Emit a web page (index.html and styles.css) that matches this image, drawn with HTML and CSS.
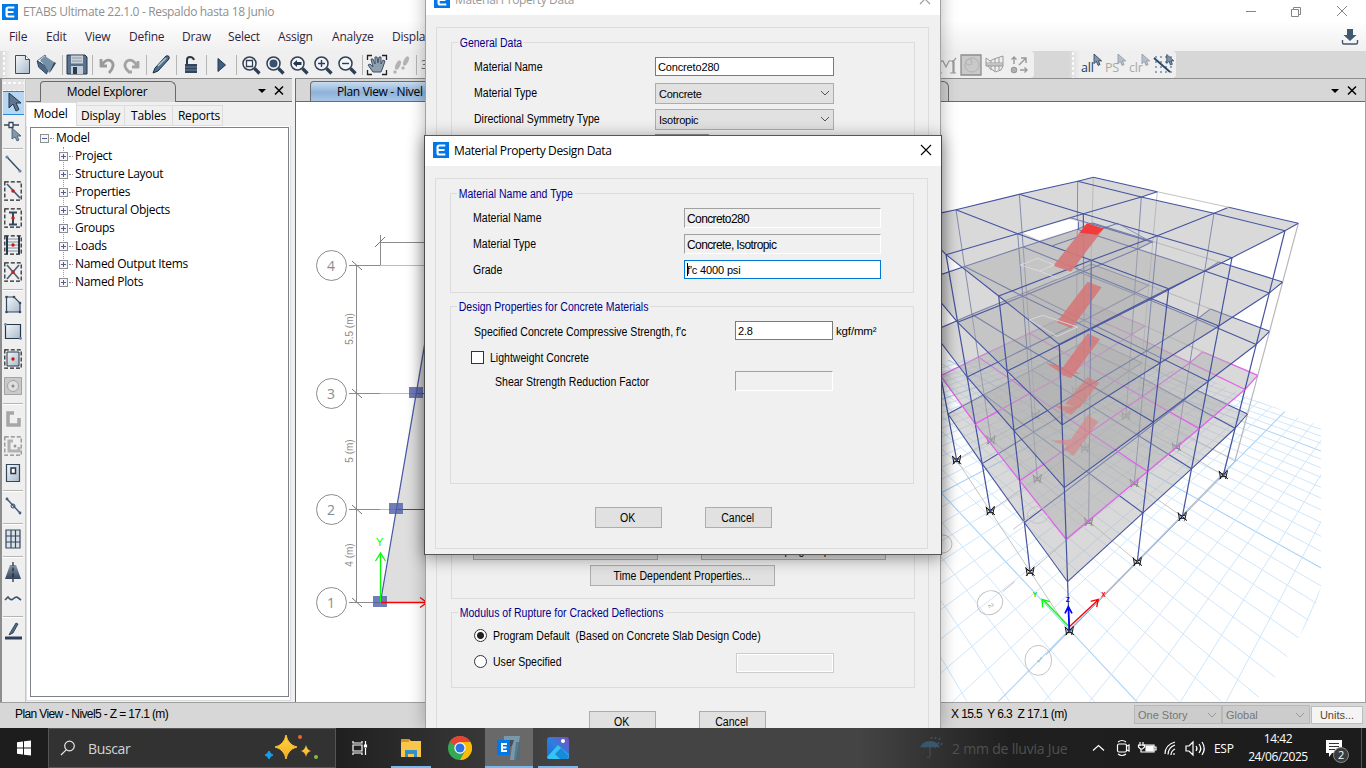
FILE: index.html
```html
<!DOCTYPE html>
<html lang="es">
<head>
<meta charset="utf-8">
<title>ETABS Ultimate 22.1.0</title>
<link rel="stylesheet" href="styles.css">
</head>
<body>
<svg width="0" height="0" class="defs">
  <defs>
    <linearGradient id="steel" x1="0" y1="0" x2="1" y2="1"><stop offset="0" stop-color="#f4f7fa"/><stop offset="1" stop-color="#a9bacb"/></linearGradient>
    <linearGradient id="steelDark" x1="0" y1="0" x2="0" y2="1"><stop offset="0" stop-color="#8598ad"/><stop offset="1" stop-color="#34475f"/></linearGradient>
    <linearGradient id="gold" x1="0" y1="0" x2="0" y2="1"><stop offset="0" stop-color="#ffd84a"/><stop offset="1" stop-color="#f7a81c"/></linearGradient>
    <linearGradient id="photo" x1="0" y1="1" x2="1" y2="0"><stop offset="0" stop-color="#1173d4"/><stop offset=".5" stop-color="#2f7de0"/><stop offset="1" stop-color="#7a4fb5"/></linearGradient>
    <symbol id="logo" viewBox="0 0 16 16"><rect width="16" height="16" fill="#0078e7"/><path d="M12.300 3.500H6.200Q4.600 3.500 4.600 5v6q0 1.500 1.600 1.500h6.100M5 8h6.500" fill="none" stroke="#fff" stroke-width="2.200"/></symbol>
    <symbol id="lens" viewBox="0 0 24 24"><circle cx="10.500" cy="10.500" r="6.500" fill="#f3f6f9" stroke="#333f52" stroke-width="1.500"/><path d="M15.500 15.500l5 5" stroke="#2c3d55" stroke-width="3.200"/></symbol>
    <symbol id="cursor" viewBox="0 0 12 16"><path d="M1 0v12l3-3 2 5 2.500-1-2-4.500h4z" fill="#7f93aa" stroke="#2d3e55" stroke-width="1"/></symbol>
    <symbol id="dashbox" viewBox="0 0 18 20"><rect x=".8" y=".8" width="16.400" height="18.400" fill="none" stroke="#222" stroke-width="1.200" stroke-dasharray="4 2"/></symbol>
  </defs>
</svg>
<div class="screen">
  <div class="app">
    <header class="titlebar">
      <svg class="logo"><use href="#logo"/></svg>
      <span class="apptitle">ETABS Ultimate 22.1.0 - Respaldo hasta 18 Junio</span>
      <svg class="winbtns" width="120" height="22" viewBox="0 0 120 22" fill="none" stroke="#858585"><path d="M5 10.500h10M50.500 8.500h7v7h-7zM52.500 8.500v-2h7v7h-2M96 5l10 10M106 5L96 15"/></svg>
    </header>
    <nav class="menubar">
      <div class="menus"><span>File</span><span>Edit</span><span>View</span><span>Define</span><span>Draw</span><span>Select</span><span>Assign</span><span>Analyze</span><span>Display</span></div>
      <svg width="18" height="18" viewBox="0 0 18 18"><path d="M6 1h6v6h3.500L9 13 2.500 7H6z" fill="#3f5873"/><path d="M1.500 12v2.500q0 1.500 1.500 1.500h12q1.500 0 1.500-1.500V12" fill="none" stroke="#3f5873" stroke-width="1.400"/></svg>
    </nav>
    <div class="toolbar">
      <div class="tools main">
        <i class="grip"></i>
        <svg viewBox="0 0 24 24"><path d="M4.500 2.500h10l4 4v14h-14z" fill="url(#steel)" stroke="#3a4b62"/><path d="M14.500 2.500v4h4" fill="#fff" stroke="#3a4b62"/></svg>
        <svg viewBox="0 0 24 24"><path d="M2 8l8-6 1 1-6 7v5z" fill="#fff" stroke="#5d7085"/><path d="M2.500 8l11 7-2 6-8-7z" fill="#4d6986" stroke="#33475d"/><path d="M5 7l5-4 9 6-5 11-3-6z" fill="#7590a9"/><path d="M14 20l5-11 2 1-5 8z" fill="#2f435a"/></svg>
        <b></b>
        <svg viewBox="0 0 24 24"><path d="M2 2h18l2 2v17H2z" fill="#59708a" stroke="#25364b"/><path d="M6 2.500h12v8H6z" fill="#c8d0d8"/><path d="M7 5h10M7 8h10" stroke="#899aac"/><path d="M6 13h12v8H6z" fill="#c5ced7"/><path d="M8 14h4v7H8z" fill="#293b50"/></svg>
        <b></b>
        <svg viewBox="0 0 24 24"><path d="M6 14V6M5 13h7M6 13q5-8 10-5 5 4-2 12" fill="none" stroke="#9a9a9a" stroke-width="2.800"/></svg>
        <svg viewBox="0 0 24 24"><path d="M19 15V8M20 14h-7M18 13Q14 5 8 8q-5 5 2 11h3" fill="none" stroke="#a3a3a3" stroke-width="2.800"/></svg>
        <b></b>
        <svg viewBox="0 0 24 24"><path d="M4 20l2-5L17 3q4-1 3 3L9 18z" fill="#52708f" stroke="#1e2d42"/><path d="M9 13l8-8" stroke="#b6c8d8" stroke-width="1.500"/></svg>
        <b></b>
        <svg viewBox="0 0 24 24"><path d="M8 12V7q0-3 3-3t4 3" fill="none" stroke="#29374a" stroke-width="2"/><path d="M6 11h12v9H6z" fill="#32455c"/><path d="M6 14h12M6 17h12" stroke="#70859b"/></svg>
        <b></b>
        <svg viewBox="0 0 24 24"><path d="M9 5.500l7.500 6.500-7.500 6.500z" fill="#3d5f83" stroke="#26364b"/></svg>
        <b></b>
        <svg viewBox="0 0 24 24"><use href="#lens"/><path d="M7.500 7.500h6v6h-6z" fill="#fff" stroke="#333f52" stroke-width="1.300"/></svg>
        <svg viewBox="0 0 24 24"><use href="#lens"/><circle cx="10.500" cy="10.500" r="4" fill="#37516f"/></svg>
        <svg viewBox="0 0 24 24"><use href="#lens"/><path d="M6 10.500l4-3.500v2h4.500v3H10v2z" fill="#26384f"/></svg>
        <svg viewBox="0 0 24 24"><use href="#lens"/><path d="M7 10.500h7M10.500 7v7" stroke="#2c3d55" stroke-width="1.400"/></svg>
        <svg viewBox="0 0 24 24"><use href="#lens"/><path d="M7 10.500h7" stroke="#2c3d55" stroke-width="1.400"/></svg>
        <b></b>
        <svg viewBox="0 0 24 24"><path d="M2.500 7V2.500H7M17 2.500h4.500V7M21.500 17v4.500H17M7 21.500H2.500V17" fill="none" stroke="#222" stroke-width="1.300"/><path d="M8 19l-5-7 2-1 3 3-2-8 2 0 2 5V4h2l1 6 1-6h2l0 7 2-4 2 1-2 6-2 5z" fill="#8fa0b1" stroke="#3f5065"/></svg>
        <svg viewBox="0 0 24 24" fill="#b3b3b3"><ellipse cx="9" cy="12" rx="2.300" ry="5" transform="rotate(25 9 12)"/><ellipse cx="17" cy="8" rx="2.300" ry="5" transform="rotate(25 17 8)"/><circle cx="6" cy="19" r="1.700"/><circle cx="14" cy="15" r="1.700"/></svg>
        <b></b><span class="threed">3</span>
        <span class="push"></span>
        <svg viewBox="0 0 24 24" fill="none" stroke="#999" stroke-width="1.200"><path d="M4 20V9M1 20h6M15 20h6M18 20V7M0 7q3 2 4 5 2-5 4-4l3 6 3-6q3-1 4 2 1-3 3-5M3 20V9M19 20V9"/></svg>
        <svg viewBox="0 0 24 24" fill="#c9c9c9" stroke="#8d8d8d"><path d="M2 2h20v20H2z" stroke-width="1.300"/><circle cx="10" cy="9" r="3" stroke="#b2b2b2"/><circle cx="13" cy="12" r="7" fill="none" stroke="#b2b2b2"/></svg>
        <svg viewBox="0 0 24 24" fill="none" stroke="#999"><path d="M3 5v8h17V3l-9 3-4 2zM3 10h17M3 12h17M5 13q2 4 5 4l2 2 6-2 2-4M8 8v2M12 6v4M16 5v5M8 13v4M12 13v5M16 13v4"/></svg>
        <svg viewBox="0 0 24 24" fill="none" stroke="#999" stroke-width="1.400"><path d="M7 11V4M4.500 6.500L7 4l2.500 2.500M12 12l7-7M14 5h5v5M13 17h7M17.500 14.500L20 17l-2.500 2.500"/><circle cx="7" cy="17" r="2.500"/><path d="M5 17h4M7 15v4" stroke-width="1"/></svg>
      </div>
      <div class="tools select">
        <i class="grip"></i>
        <span class="selico on"><em>all</em><svg viewBox="0 0 12 16"><use href="#cursor"/></svg></span>
        <span class="selico"><em>PS</em><svg viewBox="0 0 12 16"><use href="#cursor"/></svg></span>
        <span class="selico"><em>clr</em><svg viewBox="0 0 12 16"><use href="#cursor"/></svg></span>
        <svg viewBox="0 0 24 24"><g fill="none" stroke="#8ea5ba" stroke-width="1.800" stroke-dasharray="2 3"><path d="M3 4h18M3 9h18M3 14h18M3 19h18"/></g><path d="M2 5l16 14" stroke="#274565" stroke-width="1.800"/><use href="#cursor" x="14" y="1" width="9" height="13"/></svg>
      </div>
    </div>

    <div class="body">
      <aside class="sidebar">
        <div class="hgrip"></div>
        <div class="cell sel"><svg viewBox="0 0 20 24"><path d="M5 3v15l4-4 3 7 3-1.500L12 13h5z" fill="#5f7690" stroke="#26364b"/></svg></div>
        <div class="cell"><svg viewBox="0 0 20 24"><path d="M1 6h15" stroke="#34475d" stroke-width="1.500"/><path d="M6 3.500h4v5H6z" fill="#fff" stroke="#34475d" stroke-width="1.300"/><path d="M9 9v11l3-2 2 4 2-1-2-4h4z" fill="#8397ad" stroke="#40536a" stroke-width=".8"/></svg></div>
        <hr>
        <div class="cell"><svg viewBox="0 0 20 24"><path d="M4 5l13 14" stroke="#344a64" stroke-width="1.400"/><circle cx="4" cy="5" r="1.600" fill="#6c86a3"/><circle cx="17" cy="19" r="1.600" fill="#6c86a3"/></svg></div>
        <div class="cell"><svg viewBox="0 0 20 24"><use href="#dashbox" x="1" y="2" width="18" height="20"/><path d="M4 5l13 14" stroke="#445d78" stroke-width="1.700"/><circle cx="10" cy="12" r="1.700" fill="#d01414"/></svg></div>
        <div class="cell"><svg viewBox="0 0 20 24"><use href="#dashbox" x="1" y="2" width="18" height="20"/><path d="M6 6.500h8M6 18.500h8M10 6v12" stroke="#34475d" stroke-width="2"/><circle cx="10" cy="12" r="1.700" fill="#d01414"/></svg></div>
        <div class="cell"><svg viewBox="0 0 20 24"><use href="#dashbox" x="1" y="2" width="18" height="20"/><path d="M4 3v18M16 3v18" stroke="#26364b" stroke-width="2"/><path d="M5 6h10M5 9h10M5 12h10M5 15h10M5 18h10" stroke="#7d8fa2"/><circle cx="10" cy="12" r="1.700" fill="#d01414"/></svg></div>
        <div class="cell"><svg viewBox="0 0 20 24"><use href="#dashbox" x="1" y="2" width="18" height="20"/><path d="M4 5l12 14M16 5L4 19" stroke="#4f6378" stroke-width="1.700"/><circle cx="10" cy="12" r="1.700" fill="#d01414"/></svg></div>
        <hr>
        <div class="cell"><svg viewBox="0 0 20 24"><path d="M3.500 4H11l6 6v9H3.500z" fill="url(#steel)" stroke="#34475d" stroke-width="1.200"/><g fill="#344a64"><circle cx="3.500" cy="4" r="1.300"/><circle cx="11" cy="4" r="1.300"/><circle cx="17" cy="10" r="1.300"/><circle cx="17" cy="19" r="1.300"/><circle cx="3.500" cy="19" r="1.300"/></g></svg></div>
        <div class="cell"><svg viewBox="0 0 20 24"><path d="M2.500 4.500h15v14h-15z" fill="url(#steel)" stroke="#26364b" stroke-width="1.200"/><circle cx="2.500" cy="4.500" r="1.400" fill="#6c86a3"/><circle cx="17.500" cy="18.500" r="1.400" fill="#6c86a3"/></svg></div>
        <div class="cell"><svg viewBox="0 0 20 24"><use href="#dashbox" x="1" y="2" width="18" height="20"/><path d="M4 5h12v14H4z" fill="url(#steel)" stroke="#26364b"/><circle cx="10" cy="12" r="1.700" fill="#d01414"/></svg></div>
        <div class="cell"><svg viewBox="0 0 20 24"><path d="M1.500 3.500h17v17h-17z" fill="#c9c9c9" stroke="#a3a3a3"/><circle cx="10" cy="12" r="5.500" fill="#dedede" stroke="#a3a3a3"/><circle cx="10" cy="12" r="1.500" fill="#888"/></svg></div>
        <hr>
        <div class="cell"><svg viewBox="0 0 20 24"><path d="M11 6H5v12h11v-7" fill="none" stroke="#a6a6a6" stroke-width="3.500"/></svg></div>
        <div class="cell"><svg viewBox="0 0 20 24" opacity=".5"><use href="#dashbox" x="1" y="2" width="18" height="20"/><path d="M10 7H6v10h10v-4" fill="none" stroke="#777" stroke-width="3"/><circle cx="12" cy="12" r="1.500" fill="#444"/></svg></div>
        <div class="cell"><svg viewBox="0 0 20 24"><path d="M3.500 3.500h13v17h-13z" fill="url(#steel)" stroke="#34475d" stroke-width="1.200"/><path d="M8 7h4.500v5.500H8z" fill="#fff" stroke="#26364b" stroke-width="1.500"/></svg></div>
        <hr>
        <div class="cell"><svg viewBox="0 0 20 24"><path d="M4 5l13 14" stroke="#455e7a" stroke-width="1.500"/><circle cx="10" cy="12" r="2" fill="none" stroke="#34475d"/><circle cx="4" cy="5" r="1.400" fill="#455e7a"/><circle cx="17" cy="19" r="1.400" fill="#455e7a"/></svg></div>
        <hr>
        <div class="cell"><svg viewBox="0 0 20 24"><path d="M3 3h14v18H3zM8 3v18M12.500 3v18M3 9h14M3 15h14" fill="#dbe3ea" stroke="#34475d" stroke-width="1.200"/></svg></div>
        <hr>
        <div class="cell"><svg viewBox="0 0 20 24"><path d="M7 5h6l5 14H2z" fill="url(#steelDark)"/><path d="M10 2v20" stroke="#222" stroke-dasharray="4 1.500" stroke-width="1.200"/></svg></div>
        <div class="cell"><svg viewBox="0 0 20 24"><path d="M2 13l3-3q3 4 5 2t4-2l4 3" fill="none" stroke="#3b526c" stroke-width="1.600"/></svg></div>
        <hr>
        <div class="cell"><svg viewBox="0 0 20 24"><path d="M7 13l6-10 2 1-5 9-4 2z" fill="#516b86" stroke="#26364b" stroke-width=".8"/><path d="M2 18h17" stroke="#2d4058" stroke-width="3"/></svg></div>
      </aside>

      <section class="explorer">
        <div class="tabstrip"><span class="tab"><span class="sg">Model Explorer</span></span><svg class="tabctl" viewBox="0 0 30 12"><path d="M0 4h8L4 8z"/><path d="M17 1.500l8 8M25 1.500l-8 8" stroke="#000" stroke-width="1.500"/></svg></div>
        <div class="subtabs"><span class="active">Model</span><span>Display</span><span>Tables</span><span>Reports</span></div>
        <div class="treewrap"><ul class="tree">
          <li class="root"><i class="minus"></i><span>Model</span></li>
          <li><i></i><span>Project</span></li><li><i></i><span>Structure Layout</span></li><li><i></i><span>Properties</span></li><li><i></i><span>Structural Objects</span></li><li><i></i><span>Groups</span></li><li><i></i><span>Loads</span></li><li><i></i><span>Named Output Items</span></li><li><i></i><span>Named Plots</span></li>
        </ul></div>
      </section>

      <section class="workspace">
        <div class="tabstrip"><span class="tab plan"><span class="sg">Plan View - Nivel</span></span><span class="tab view3d"></span><svg class="tabctl" viewBox="0 0 30 12"><path d="M0 4h8L4 8z"/><path d="M17 1.500l8 8M25 1.500l-8 8" stroke="#000" stroke-width="1.500"/></svg></div>
        <svg class="canvas" viewBox="296 102 1069 600">
          <path d="M380.500 602L452 175v427z" fill="#dedede"/>
          <g fill="none" stroke="#8c8c8c"><path d="M356.500 265.500v337M349 265.500h31M380.500 235v30M380.500 242.500h60M349 393.500h31M349 509.500h31M349 602.500h31"/><path d="M352 261l10 9M352 389l10 9M352 505l10 9M352 598l10 9M375 247l10-10" stroke="#777"/><path d="M380 265.500h60M380 393.500h60M380 509.500h60" stroke="#bdbdbd"/>
          <circle cx="331.500" cy="265.500" r="15"/><circle cx="331.500" cy="393.500" r="15"/><circle cx="331.500" cy="509.500" r="15"/><circle cx="331.500" cy="602.500" r="15"/></g>
          <g class="bubbles"><text x="331" y="271">4</text><text x="331" y="399">3</text><text x="331" y="515">2</text><text x="331" y="608">1</text></g>
          <g class="dims"><text transform="translate(353 329) rotate(-90)">5.5 (m)</text><text transform="translate(353 451) rotate(-90)">5 (m)</text><text transform="translate(353 555) rotate(-90)">4 (m)</text></g>
          <path d="M380.500 602L434 290" stroke="#4658a4" fill="none" stroke-width="1.200"/><path d="M396 509.500h40M416 393.500h20" stroke="#3c4d94"/>
          <path d="M373 596h14v11h-14zM389 503h14v11h-14zM409 387h14v11h-14z" fill="#4c5ca8" fill-opacity=".8"/>
          <path d="M380.500 602v-48M375.500 561l5-8 5 8" stroke="#0f0" fill="none" stroke-width="1.300"/><path d="M381 602.500h46M420 597.500l7 5-7 5" stroke="#f00" fill="none" stroke-width="1.300"/>
          <text x="376" y="546" class="ylab">Y</text>
          <g id="model" transform="translate(936 160) scale(.33333)"></g>
        </svg>
      </section>
    </div>

    <footer class="statusbar">
      <span class="st left">Plan View - Nivel5 - Z = 17.1 (m)</span>
      <span class="st coords">X 15.5&nbsp; Y 6.3&nbsp; Z 17.1 (m)</span>
      <span class="drop">One Story<svg viewBox="0 0 10 6"><path d="M1 1l4 4 4-4"/></svg></span><span class="drop two">Global<svg viewBox="0 0 10 6"><path d="M1 1l4 4 4-4"/></svg></span><span class="units">Units...</span>
    </footer>

    <footer class="taskbar">
      <svg class="start" width="14" height="16" viewBox="0 0 14 16" fill="#fff"><path d="M0 2.300L6 1.500v6H0zM7 1.300L14 .4v7.100H7zM0 8.500h6v6l-6-.8zM7 8.500h7v7.100l-7-.9z"/></svg>
      <div class="search"><svg class="mag" viewBox="0 0 16 16"><circle cx="9.500" cy="6" r="4.800"/><path d="M6.200 9.800L1 15"/></svg><span>Buscar</span>
        <svg class="spark" viewBox="0 0 56 28"><path d="M23 1q2 10 11 12-9 2-11 12-2-10-11-12 9-2 11-12z" fill="url(#gold)" stroke="#fbc02d"/><path d="M43 11q1 5 5 6-4 1-5 6-1-5-5-6 4-1 5-6z" fill="url(#gold)"/><path d="M6 17q1 3 4 4-3 1-4 4-1-3-4-4 3-1 4-4z" fill="#18a0f0" stroke="#18a0f0"/><circle cx="37" cy="3" r="2" fill="#f26430"/><circle cx="53" cy="23" r="2" fill="#7cc142"/></svg></div>
      <div class="tb task"><svg width="16" height="16" viewBox="0 0 16 16" fill="none" stroke="#fff" stroke-width="1.200"><path d="M1 1v2h9V1M1 5h9v6H1zM1 15v-2h9v2M13.500 1v4M13.500 8v7"/><path d="M12.500 5h2v2h-2z" fill="#fff"/></svg></div>
      <div class="tb run more"><svg width="22" height="20" viewBox="0 0 22 20"><path d="M1 1h8l2 2h10v16H1z" fill="#f7c64b"/><path d="M1 1h8v3H1z" fill="#d9941c"/><path d="M5 19v-7h12v7h-3v-3H8v3z" fill="#318fce"/></svg></div>
      <div class="tb"><svg width="24" height="24" viewBox="0 0 24 24"><circle cx="12" cy="12" r="12" fill="#34a853"/><path d="M12 12L1.600 6A12 12 0 0 1 22.400 6z" fill="#ea4335"/><path d="M12 6h10.400A12 12 0 0 1 12 24l5-9z" fill="#fbbc05"/><circle cx="12" cy="12" r="5.700" fill="#fff"/><circle cx="12" cy="12" r="4.500" fill="#2f72e8"/></svg></div>
      <div class="tb run active"><svg width="24" height="24" viewBox="0 0 24 24"><path d="M7 0h16l-4 24h-6l2-14q-4 3-8 2z" fill="#7898ac"/><path d="M10 4h7l-2 6q-3 2-5 0z" fill="#4a4e52"/><path d="M19 6l4 0v18h-6z" fill="#466c82" opacity=".7"/><path d="M0 4h13v15H0z" fill="#0078e7"/><path d="M10 8H5v7h5M5 11.500h4.500" fill="none" stroke="#fff" stroke-width="2"/></svg></div>
      <div class="tb run"><svg width="22" height="22" viewBox="0 0 22 22"><rect width="22" height="22" rx="3" fill="url(#photo)"/><path d="M0 20l11-12 11 10v2q0 2-2 2H2q-2 0-2-2z" fill="#34c3f3"/><path d="M8 17l6-6 8 8q-1 3-2 3H13z" fill="#168bd9"/><circle cx="16" cy="4" r="2" fill="#fff"/></svg></div>
      <div class="weather"><svg width="24" height="24" viewBox="0 0 24 24"><path d="M1 12q2-7 10-7t10 7q-3-2-5 0-3-2-5 0-3-2-5 0-3-2-5 0z" fill="#39566b"/><path d="M11 11v9q-1 3-3 1" fill="none" stroke="#4a4f55"/><path d="M12 3l1-2M16 3l1-2M20 4l1-2M19 8l1-2M22 9l1-2" stroke="#385772" stroke-width="1.500"/></svg><span>2 mm de lluvia Jue</span></div>
      <svg class="tray" width="124" height="22" viewBox="0 0 124 22" fill="none" stroke="#fff" stroke-width="1.200"><path d="M2 13.500l5.500-5 5.500 5"/><path d="M28 7h6q1.500 0 1.500 1.500v5Q35.500 15 34 15h-6q-1.500 0-1.500-1.500v-5Q26.500 7 28 7zM36 9l2-1v6l-2-1M27 5q4-3 8 0M27 17q4 3 8 0"/><path d="M53 8h10v7H50v-3M63 10h2v3h-2"/><path d="M55 9h7v5h-7z" fill="#fff"/><path d="M49 5v4M52 5v4M47.500 8h6v2l-2 2h-2l-2-2z"/><path d="M74 17q0-9 10-12M77 17.500q0-7 7-9.500M80 18q0-4 4-6M83 18v-2"/><path d="M95 9h3l4-4v13l-4-4h-3zM105 9q2 2.500 0 5M108 7q3.500 4.500 0 9M111 5q4.500 6.500 0 13" /></svg>
      <span class="lang">ESP</span>
      <span class="clock"><span>14:42</span><span>24/06/2025</span></span>
      <svg class="note" width="28" height="28" viewBox="0 0 28 28"><path d="M1 1h16v13H7l-3 4v-4H1z" fill="#fff"/><path d="M4 4.500h10M4 7.500h10M4 10.500h6" stroke="#333"/><circle cx="16" cy="16" r="7.500" fill="#3c3c3c" stroke="#8a8a8a"/><text x="13" y="20">2</text></svg>
      <i class="peek"></i>
    </footer>
  </div>

  <div class="dialog back">
    <div class="dtitle"><svg class="logo"><use href="#logo"/></svg><span>Material Property Data</span><svg class="x" viewBox="0 0 12 12"><path d="M1 1l10 10M11 1L1 11"/></svg></div>
    <div class="frame">
      <div class="group g1"><span class="legend">General Data</span>
        <div class="row"><span class="lb">Material Name</span><span class="field">Concreto280</span></div>
        <div class="row"><span class="lb">Material Type</span><span class="combo">Concrete<svg viewBox="0 0 10 6"><path d="M1 1l4 4 4-4"/></svg></span></div>
        <div class="row"><span class="lb">Directional Symmetry Type</span><span class="combo">Isotropic<svg viewBox="0 0 10 6"><path d="M1 1l4 4 4-4"/></svg></span></div>
        <div class="row"><span class="lb"></span><span class="stub"></span></div>
      </div>
      <div class="group g2">
        <div class="pair"><span class="btn wide"></span><span class="btn wide"><span class="lbt">Material Damping Properties...</span></span></div>
        <div class="single"><span class="btn wide"><span class="lbt">Time Dependent Properties...</span></span></div>
      </div>
      <div class="group g3"><span class="legend">Modulus of Rupture for Cracked Deflections</span>
        <div class="opt"><i class="radio on"></i><span class="lb">Program Default&nbsp; (Based on Concrete Slab Design Code)</span></div>
        <div class="opt"><i class="radio"></i><span class="lb">User Specified</span><span class="field off"></span></div>
      </div>
      <div class="buttons"><span class="btn"><span class="lbt">OK</span></span><span class="btn"><span class="lbt">Cancel</span></span></div>
    </div>
  </div>

  <div class="dialog front">
    <div class="dtitle"><svg class="logo"><use href="#logo"/></svg><span>Material Property Design Data</span><svg class="x" viewBox="0 0 12 12"><path d="M1 1l10 10M11 1L1 11"/></svg></div>
    <div class="frame">
      <div class="group a"><span class="legend">Material Name and Type</span>
        <div class="row"><span class="lb">Material Name</span><span class="field ro">Concreto280</span></div>
        <div class="row"><span class="lb">Material Type</span><span class="field ro">Concrete, Isotropic</span></div>
        <div class="row"><span class="lb">Grade</span><span class="field focus">f'c 4000 psi</span></div>
      </div>
      <div class="group b"><span class="legend">Design Properties for Concrete Materials</span>
        <div class="row"><span class="lb">Specified Concrete Compressive Strength, f'c</span><span class="field">2.8</span><span class="unit">kgf/mm²</span></div>
        <div class="row check"><i></i><span class="lb">Lightweight Concrete</span></div>
        <div class="row shear"><span class="lb">Shear Strength Reduction Factor</span><span class="field ro"></span></div>
      </div>
      <div class="buttons"><span class="btn"><span class="lbt">OK</span></span><span class="btn"><span class="lbt">Cancel</span></span></div>
    </div>
  </div>
</div>
<script src="model.js"></script>
</body>
</html>
```
FILE: styles.css
```css
* { box-sizing: border-box; }
body { margin: 0; background: #fff; font: 12px "Open Sans", "Noto Sans", sans-serif; color: #000; }
.defs { position: absolute; }
.screen { position: relative; width: 1366px; height: 768px; overflow: hidden; white-space: nowrap; }
.app { display: flex; flex-direction: column; height: 768px; }
.logo { width: 16px; height: 16px; flex: none; }

.titlebar { height: 23px; display: flex; align-items: center; padding-left: 2px; background: #fff; color: #8f8f8f; }
.apptitle { margin-left: 5px; letter-spacing: -.33px; }
.winbtns { margin-left: auto; margin-right: 5px; }
.menubar { height: 28px; display: flex; align-items: center; justify-content: space-between; background: linear-gradient(#fdfdfd, #f0f0f0); padding: 0 7px 0 9px; color: #321f3c; }
.menus { display: grid; grid-template-columns: 37px 39px 44px 53px 46px 50px 54px 60px 50px; letter-spacing: -.2px; padding-bottom: 1px; }
.toolbar { height: 27px; background: #d7d7d7; display: flex; }
.tools { display: flex; align-items: center; background: #efefef; border-radius: 0 4px 4px 0; }
.tools > svg { width: 24px; height: 24px; flex: none; }
.tools b { width: 6px; height: 20px; flex: none; background: linear-gradient(90deg, transparent 3px, #b5b5b5 3px, #b5b5b5 4px, transparent 4px); }
.main { width: 1034px; padding-right: 3px; }
.push { flex: 1; }
.threed { color: #5d7086; margin-left: 2px; }
.grip { width: 11px; height: 27px; background: radial-gradient(circle, #fff 1px, transparent 1.5px) 0 0/8px 5px, linear-gradient(90deg, #d8d8d8, #efefef); flex: none; }
.select { width: 107px; margin-left: 35px; }
.selico { width: 24px; height: 24px; display: flex; color: #a9a9a9; position: relative; }
.selico em { font: 12.500px "Open Sans", sans-serif; letter-spacing: -.2px; margin: 6px 0 0 1px; }
.selico svg { position: absolute; left: 13px; top: 1px; width: 10px; height: 13px; opacity: .5; }
.selico.on { color: #243c5a; }
.selico.on svg { opacity: 1; }

.body { height: 624px; display: flex; background: #efefef; }
.sidebar { width: 25px; border-left: 2px solid #8d8d8d; border-top: 1px solid #8d8d8d; background: #efefef; padding-right: 1px; }
.hgrip { height: 12px; background: radial-gradient(circle, #fff 1px, transparent 1.5px) 0 0/5px 8px, #e4e4e4; }
.cell { height: 27px; display: flex; align-items: center; justify-content: center; }
.cell svg { width: 20px; height: 24px; margin-top: -2px; }
.sel { background: #b5d7f3; border: solid #2a8ad8; border-width: 1px 0; height: 24px; margin: 0 0 3px 1px; }
.sidebar hr { border: 0; height: 1px; margin: 3px 1px 2px; background: #b5b5b5; box-shadow: 0 1px #fff; }

.explorer { width: 267px; margin-right: 3px; display: flex; flex-direction: column; border-left: 1px solid #c8c8c8; border-top: 1px solid #8d8d8d; padding-bottom: 1px; }
.tabstrip { height: 23px; background: #d7d7d7; border-bottom: 1px solid #6a6a6a; display: flex; align-items: flex-end; }
.tab { height: 20px; border: 1px solid #6a6a6a; border-bottom: 0; border-radius: 4px 6px 0 0; text-align: center; line-height: 19px; }
.explorer .tab { width: 136px; margin-left: 14px; margin-bottom: -1px; background: #d7d7d7; height: 21px; padding-right: 2px; line-height: 20px; }
.sg { display: inline-block; letter-spacing: -.35px; }
.tabctl { width: 30px; height: 12px; margin: 0 4px 4px auto; }
.subtabs { height: 24px; display: flex; align-items: flex-end; letter-spacing: -.2px; padding-left: 1px; background: #f0f0f0; }
.subtabs span { height: 21px; line-height: 20px; border: 1px solid #dcdcdc; border-left: 0; text-align: center; width: 48px; }
.subtabs .active { background: #fff; height: 24px; width: 50px; padding-right: 2px; border-bottom: 0; line-height: 22px; }
.subtabs span:last-child { width: 50px; padding-left: 3px; }
.treewrap { flex: 1; background: #fff; border: 1px solid #dcdcdc; border-top: 0; padding: 1px 1px 3px 3px; margin-right: 1px; }
.tree { margin: 0; padding: 0; list-style: none; height: 100%; border: 1px solid #7c818c; background: #fff; position: relative; }
.tree::before { content: ""; position: absolute; left: 32px; top: 19px; height: 130px; border-left: 1px dotted #999; }
.tree li { height: 18px; display: flex; align-items: center; padding-left: 28px; position: relative; }
.tree li span { letter-spacing: -.3px; }
.tree li.root { padding-left: 9px; }
.tree i { width: 9px; height: 9px; margin-top: 3px; border: 1px solid #8f8f8f; background: linear-gradient(#4a5fa0, #4a5fa0) center/5px 1px no-repeat, linear-gradient(#4a5fa0, #4a5fa0) center/1px 5px no-repeat, #f6f6f6; margin-right: 7px; }
.tree i.minus { background: linear-gradient(#4a5fa0, #4a5fa0) center/5px 1px no-repeat, #f6f6f6; }
.tree li::after { content: ""; position: absolute; left: 38px; top: 10px; width: 4px; border-top: 1px dotted #888; }
.tree li.root::after { left: 19px; }

.workspace { flex: 1; display: flex; flex-direction: column; border-left: 1px solid #6a6a6a; border-right: 1px solid #a2a2a2; border-top: 1px solid #8d8d8d; }
.plan { margin-left: 14px; width: 330px; text-align: left; padding-left: 26px; background: linear-gradient(#c9dcf0, #8fb2d9 55%, #a9c6e6); }
.view3d { width: 309px; border-left: 0; background: #cfcfcf; }
.canvas { width: 1069px; height: 600px; background: #fff; display: block; }
.bubbles text { font: 14px "Open Sans", sans-serif; fill: #8c8c8c; text-anchor: middle; }
.dims text { font: 10px "Liberation Sans", sans-serif; fill: #8c8c8c; text-anchor: middle; }
.ylab { font: 11px "Liberation Sans", sans-serif; fill: #0f0; }
.axis { font: bold 20px "Liberation Sans", sans-serif; }
.bub3 { font: 22px "Liberation Sans", sans-serif; fill: #aaa; }

.statusbar { height: 26px; background: #d7d7d7; border-top: 1px solid #a0a0a0; display: flex; align-items: center; font: 12px "Liberation Sans", sans-serif; padding-bottom: 2px; }
.st { letter-spacing: -.62px; padding-bottom: 1px; }
.left { margin-left: 15px; width: 936px; }
.coords { width: 183px; letter-spacing: -.6px; }
.drop { width: 88px; height: 19px; border: 1px solid #b8b8b8; background: #ccc; color: #777; display: flex; align-items: center; justify-content: space-between; padding: 0 4px 0 3px; font-size: 11px; }
.drop svg { width: 10px; height: 6px; fill: none; stroke: #999; }
.units { margin-left: 2px; width: 50px; height: 16px; background: #f4f4f4; outline: 1px solid #bdbdbd; text-align: center; line-height: 16px; color: #5a4630; font-size: 11px; }

.taskbar { height: 40px; display: flex; align-items: center; color: #fff; background: linear-gradient(90deg, #1d1d1d 0, #202020 340px, #444 560px, #444 860px, #1f1f1f 1010px, #1c1c1c); }
.start { margin: 0 16px 0 17px; flex: none; }
.search { width: 288px; height: 40px; margin-left: 1px; background: #323232; border: 1px solid #555; display: flex; align-items: center; color: #d4d4d4; font-size: 14px; letter-spacing: -.35px; flex: none; }
.mag { width: 16px; height: 16px; fill: none; stroke: #e8e8e8; stroke-width: 1.200; margin: 0 12px 0 11px; }
.spark { width: 56px; height: 28px; margin: 0 16px 0 auto; }
.tb { width: 49px; height: 40px; flex: none; display: flex; align-items: center; justify-content: center; }
.task { padding-right: 2px; }
.run { border-bottom: 2px solid #76b9ed; padding-top: 2px; width: 40px; margin: 0 5px; }
.more { margin: 0 4px 0 6px; }
.run.active { background: #696969; width: 48px; margin: 0 0 0 1px; }
.active + .run { margin-left: 5px; }
.weather { margin-left: auto; width: 172px; display: flex; align-items: center; color: #505050; font-size: 14px; gap: 9px; flex: none; letter-spacing: -.2px; }
.tray { margin-left: 0; flex: none; }
.lang { margin-left: -1px; width: 34px; letter-spacing: -.3px; }
.clock { width: 60px; display: flex; flex-direction: column; align-items: center; line-height: 18px; letter-spacing: -.4px; }
.note { margin: 9px 0 0 17px; flex: none; }
.note text { font: 11px "Open Sans", sans-serif; fill: #fff; }
.peek { width: 1px; height: 40px; background: #555; margin: 0 4px 0 8px; }

.dialog { position: absolute; background: #f0f0f0; }
.back { left: 425px; top: -16px; width: 516px; height: 744px; overflow: hidden; border: solid #a2a2a2; border-width: 0 1px; }
.front { left: 424px; top: 135px; width: 518px; height: 420px; border: 1px solid #575757; box-shadow: 0 3px 16px rgba(0,0,0,.42); }
.screen::after { content: ""; position: absolute; left: 425px; top: -16px; width: 516px; height: 744px; box-shadow: 0 0 16px rgba(0,0,0,.28); pointer-events: none; clip-path: inset(0 -25px 0 -25px); }
.dtitle { background: #fff; display: flex; align-items: center; }
.dtitle span { margin: -1px 0 0 5px; letter-spacing: -.38px; }
.x { width: 12px; height: 12px; margin: -2px 0 0 auto; fill: none; stroke: currentColor; stroke-width: 1.100; }
.back .dtitle { height: 31px; padding: 0 9px 0 8px; color: #999; }
.back .dtitle span { margin-top: 0; }
.front .dtitle { height: 30px; padding: 0 9px 0 8px; }
.front .logo { margin-top: -2px; }
.frame { border: 1px solid #dcdcdc; }
.back .frame { margin: 12px 11px 0 10px; padding: 14px 13px 0 14px; height: 760px; }
.front .frame { margin: 12px 13px 0 10px; height: 371px; padding: 14px 13px 0 14px; }
.group { border: 1px solid #dcdcdc; position: relative; }
.legend { position: absolute; left: 6px; top: -7px; padding: 0 2px; background: #f0f0f0; color: #00008b; font: 12px/15px "Liberation Sans", sans-serif; transform: scaleX(.875); transform-origin: 0 50%; }
.lb, .lbt, .unit { font: 12px "Liberation Sans", sans-serif; display: inline-block; }
.lb { transform: scaleX(.878); transform-origin: 0 50%; flex: none; }
.lbt { transform: scaleX(.88); transform-origin: 50% 50%; }
.row { height: 26px; display: flex; align-items: center; }
.back .row .lb { width: 181px; }
.g1 { height: 458px; padding: 11px 0 0 22px; }
.field { height: 19px; border: 1px solid #7a7a7a; background: #fff; font: 11px/18px "Liberation Sans", sans-serif; padding-left: 2px; flex: none; letter-spacing: -.15px; margin-bottom: 1px; }
.back .row .field, .combo { width: 179px; flex: none; }
.combo { height: 21px; border: 1px solid #acacac; background: #e1e1e1; font: 11px "Liberation Sans", sans-serif; display: flex; align-items: center; justify-content: space-between; padding: 2px 3px 0 3px; letter-spacing: -.25px; }
.combo svg { width: 10px; height: 6px; margin-top: -2px; fill: none; stroke: #555; }
.stub { width: 54px; height: 23px; border: 1px solid #8f8f8f; }
.g2 { margin-top: 10px; height: 89px; padding: 28px 28px 0 21px; }
.btn { display: flex; align-items: center; justify-content: center; width: 67px; height: 21px; background: #e1e1e1; border: 1px solid #adadad; flex: none; padding-right: 2px; }
.wide { width: 185px; padding-right: 0; }
.pair { display: flex; gap: 43px; }
.single { display: flex; justify-content: center; margin: 5px 0 0 6px; }
.g3 { margin-top: 13px; height: 76px; padding: 10px 0 0 22px; }
.opt { height: 26px; display: flex; align-items: center; }
.radio { width: 13px; height: 13px; border: 1px solid #333; border-radius: 50%; background: #fff; margin: -1px 6px 0 0; flex: none; }
.radio.on { background: radial-gradient(circle, #222 3px, #fff 4px); }
.off { width: 98px; height: 20px; background: #f0f0f0; border-color: #ccc; box-shadow: inset 0 0 0 1px #fff; margin: 2px 80px 0 auto; }
.back .buttons { display: flex; gap: 43px; margin: 23px 0 0 138px; }

.a { height: 100px; padding: 11px 0 0 22px; }
.a .lb { width: 211px; }
.a .field { width: 197px; }
.ro { background: #f0f0f0; border-color: #a0a0a0 #fff #fff #a0a0a0; height: 20px; font: 12px/20px "Liberation Sans", sans-serif; letter-spacing: -.6px; margin-bottom: 0; }
.a .focus { border-color: #0078d7; background: linear-gradient(#000, #000) 2px 2px/1px 13px no-repeat, #fff; letter-spacing: -.15px; }
.b { margin-top: 13px; height: 178px; padding: 12px 0 0 23px; }
.b .lb { width: 261px; }
.b .row:not(.check) .field { width: 98px; }
.b .row:first-of-type .field { margin-bottom: 3px; }
.unit { margin: -2px 0 0 3px; letter-spacing: -.15px; font-size: 11.500px; }
.b .check { margin-left: -3px; height: 26px; }
.check i { width: 13px; height: 13px; border: 1px solid #333; background: #fff; margin: -1px 6px 0 0; }
.b .shear { padding-left: 21px; height: 22px; }
.b .shear .lb { width: 240px; }
.b .shear .field { margin-bottom: 3px; }
.front .buttons { display: flex; gap: 43px; margin: 23px 0 0 145px; }
```
FILE: model.js
```js
// Column heads (roof) and feet (base); rows run back from the front face.
const roof = [
  [[370,553],[698,386],[888,293],[1047,212],[1087,190]],
  [[188,408],[466,301],[664,227],[834,160],[878,142]],
  [[30,284],[245,221],[442,161],[616,111],[664,95]],
  [[-75,178],[60,149],[250,103],[425,64],[472,52]]
];
const base = [
  [[400,1413],[604,1205],[739,1070],[862,945],[897,903]],
  [[282,1235],[458,1085],[595,969],[721,860],[755,830]],
  [[163,1053],[304,957],[447,865],[570,767],[605,745]],
  [[62,900],[165,840],[298,765],[420,690],[455,670]]
];
const levels = [[1,0],[.828,.045],[.68,.07],[.5,.08],[.281,.06],[0,0]];
function node(l, i, j) {
  const t = levels[l][0] - levels[l][1] * (i + j) / 7, a = roof[j][i], b = base[j][i];
  return [a[0] + (b[0] - a[0]) * t, a[1] + (b[1] - a[1]) * t].map(v => v.toFixed(1));
}
const out = [];
const line = (a, b, c, w) => out.push(`<path d="M${a}L${b}" stroke="${c}" stroke-width="${w}" fill="none"/>`);

// Ground grid, drawn as two pencils of lines through the vanishing points.
out.push('<clipPath id="ground"><path d="M15 600L600 600 820 660 1155 800V1280L1138 1343 1110 1395 1077 1450 1043 1508 1007 1570 955 1625H15z"/></clipPath><clipPath id="pane"><path d="M15 0H1286V1625H15z"/></clipPath><g clip-path="url(#pane)"><g clip-path="url(#ground)">');
const O = [400, 1409];
function pencil(along, through, step, from, to) {
  for (let k = from; k <= to; k++) {
    const s = step * k;
    const p = [(O[0] + along[0] * s) / (1 + s), (O[1] + along[1] * s) / (1 + s)];
    const e = [p[0] + (p[0] - through[0]) * 4, p[1] + (p[1] - through[1]) * 4];
    line(through, e, k % 10 ? '#cfe6fb' : '#a6d3fa', k % 10 ? 3 : 3.2);
  }
}
pencil([1654,139], [-790,139], .0445, -13, 34);
pencil([-790,139], [1654,139], .0478, -13, 26);
out.push('</g>');

for (let j = 0; j < 4; j++) line(base[j][0], base[j][4], '#b9b9b9', 2.5);
for (let i = 0; i < 5; i++) line(base[0][i], base[3][i], '#b9b9b9', 2.5);
line([400,1413], [330,1485], '#9fb3c6', 2.5);
line([400,1413], [862,945], '#8d9fc0', 2.5);

function support(x, y, c) {
  out.push(`<path d="M${x-14} ${y-12}l28 24M${x+13} ${y-15}l-25 28M${x-12} ${y-12}l4 24M${x+12} ${y-12}l-5 24M${x-8} ${y-3}h16M${x-7} ${y+5}h15" fill="none" stroke="${c}" stroke-width="3"/>`);
}
for (let j = 0; j < 4; j++) for (let i = 0; i < 4; i++) support(...base[j][i], i && j ? '#555' : '#111');

for (let l = 1; l < 6; l++) {
  for (let j = 3; j >= 0; j--) for (let i = 4; i >= 0; i--) {
    if (i === 4 && j === 1) continue;
    line(node(l-1,i,j), node(l,i,j), i === 4 ? '#b8b8b8' : '#4453a0', i && j ? 2.6 : 3.6);
  }
  let d = '';
  for (let j = 0; j < 3; j++) for (let i = 0; i < 4; i++)
    if (!(i === 3 && j === 1)) d += `M${node(l,i,j)}L${node(l,i+1,j)}L${node(l,i+1,j+1)}L${node(l,i,j+1)}z`;
  out.push(`<path d="${d}" fill="#afafaf" fill-opacity=".48"/>`);
  if (l === 5) out.push('<path d="M258 217L310 241 428 205V184L400 178z" fill="#fff"/><path d="M427 184v24M442 161v48" stroke="#4453a0" stroke-width="3"/>');
  const c = l === 2 ? '#e062ea' : '#4453a0';
  const w = l === 2 ? 3.8 : 3.2;
  for (let j = 0; j < 4; j++) for (let i = 0; i < 4; i++) line(node(l,i,j), node(l,i+1,j), c, w);
  for (let j = 0; j < 3; j++) for (let i = 0; i < 5; i++) line(node(l,i,j), node(l,i,j+1), i === 4 && j === 1 ? '#c4c4c4' : c, w);
}
line([400,172], [650,247], '#5563a4', 2.5);
line([350,257], [545,190], '#5563a4', 2.5);
line([545,190], [650,248], '#7b84ad', 2.5);

// Stair flights, fading with depth.
out.push(`
<path d="M455 765l32 20-75 103-28-20z M345 842l90-6-30 25z" fill="#d98080" opacity=".6"/>
<path d="M455 650l35 18-60 77-42-14z M355 737l75 3-25 25z" fill="#d97878" opacity=".65"/>
<path d="M455 520l37 18-87 117-37-15z M330 609l38 8 67 24-65-5z" fill="#d87474" opacity=".8"/>
<path d="M455 365l42 17-90 123-45-18z" fill="#d67474" opacity=".85"/>
<path d="M453 190l50 16-98 129-53-18z" fill="#d47878" opacity=".92"/>
<path d="M453 190l50 16-20 18-52-6z" fill="#f23c3c"/>
<path d="M253 315l52-20 50 20-45 18zM310 333l55 22 45-20M280 480l40-14 105 35-62 28z" fill="none" stroke="#ddd" stroke-width="2.500"/>
<path d="M370 553L378 795" stroke="#4453a0" stroke-width="3.500"/>
<path d="M466 301L463 560" stroke="#6b77ae" stroke-width="3"/>`);

// Grid bubbles and the axis triad.
out.push(`<g fill="none" stroke="#c0c0c0" stroke-width="2.800"><ellipse cx="162" cy="1328" rx="39" ry="35" transform="rotate(-30 162 1328)"/><ellipse cx="307" cy="1501" rx="40" ry="45"/><ellipse cx="305" cy="1065" rx="31" ry="25"/><ellipse cx="20" cy="1152" rx="28" ry="27"/><path d="M200 1295l36-30M232 1108l65-50"/></g>
<text class="bub3" transform="translate(155 1335) rotate(60)">2</text><text class="bub3" transform="translate(302 1500) rotate(45)">1</text>
<path d="M400 1400L320 1318M320 1342l-2-24 24 7" stroke="#0f0" stroke-width="4" fill="none"/>
<path d="M400 1400L486 1320M464 1324l23-6-5 23" stroke="#f00" stroke-width="4" fill="none"/>
<path d="M400 1410L397 1342M387 1360l10-20 11 20" stroke="#00f" stroke-width="5" fill="none"/>
<g class="axis"><text x="290" y="1311" fill="#0d0">Y</text><text x="389" y="1327" fill="#00f">Z</text><text x="496" y="1312" fill="#f00">X</text></g></g>`);
document.getElementById('model').innerHTML = out.join('');
```
